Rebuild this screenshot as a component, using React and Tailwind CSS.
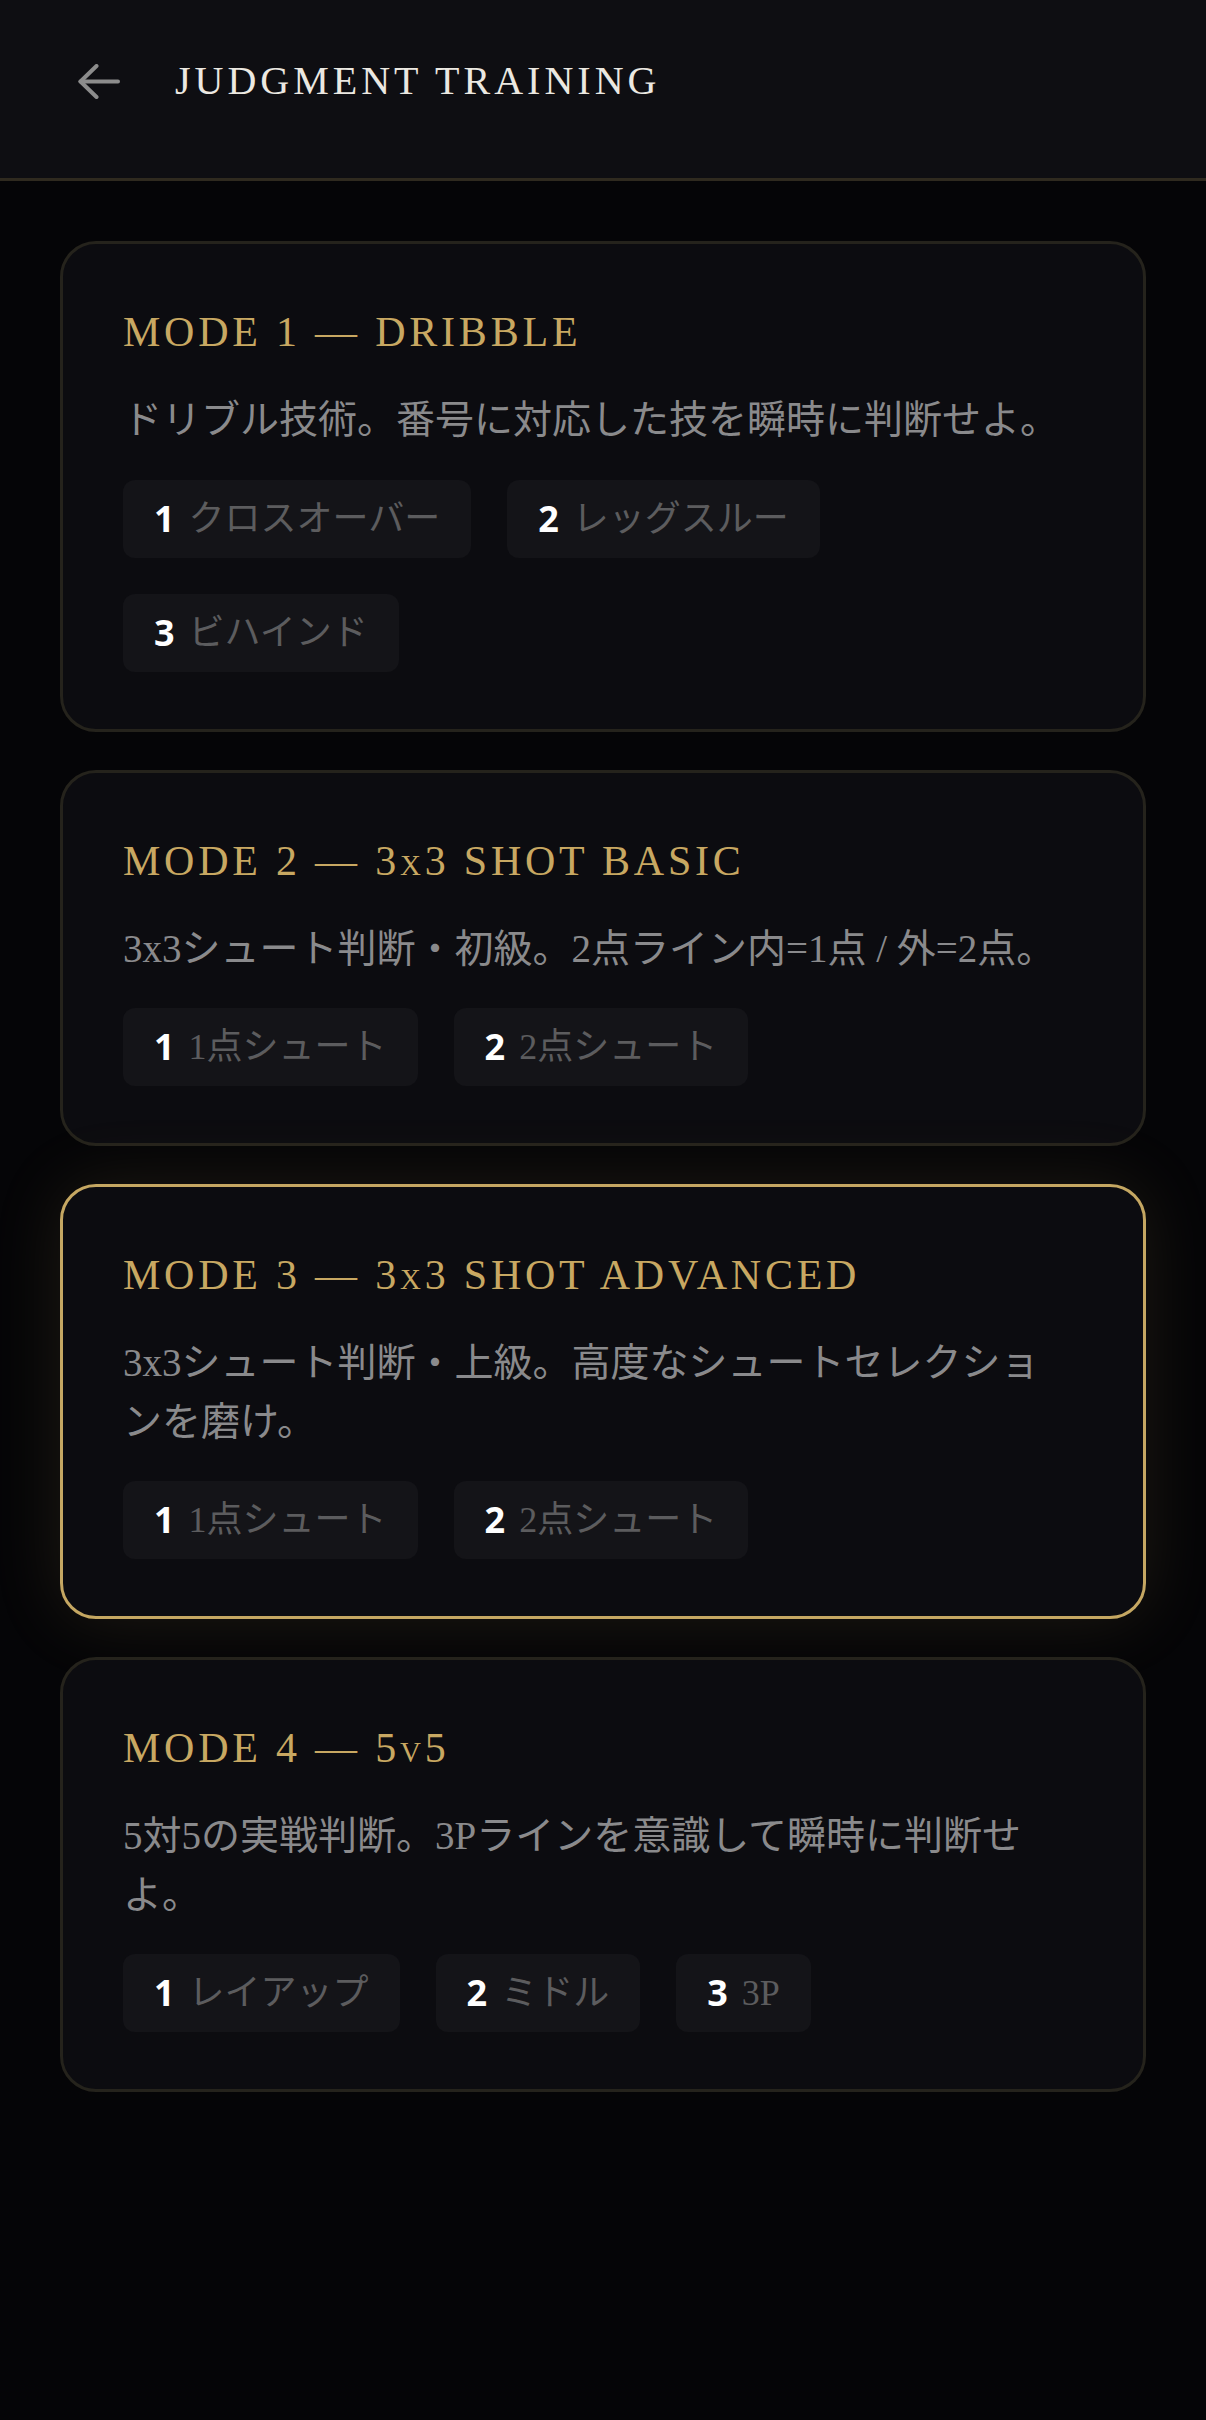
import React from "react";

const modes = [
  {
    title: "MODE 1 — DRIBBLE",
    desc: "ドリブル技術。番号に対応した技を瞬時に判断せよ。",
    options: ["クロスオーバー", "レッグスルー", "ビハインド"],
  },
  {
    title: "MODE 2 — 3x3 SHOT BASIC",
    desc: "3x3シュート判断・初級。2点ライン内=1点 / 外=2点。",
    options: ["1点シュート", "2点シュート"],
  },
  {
    title: "MODE 3 — 3x3 SHOT ADVANCED",
    desc: "3x3シュート判断・上級。高度なシュートセレクションを磨け。",
    options: ["1点シュート", "2点シュート"],
    active: true,
  },
  {
    title: "MODE 4 — 5v5",
    desc: "5対5の実戦判断。3Pラインを意識して瞬時に判断せよ。",
    options: ["レイアップ", "ミドル", "3P"],
  },
];

const serif = "font-['Liberation_Serif','Noto_Sans_CJK_JP',serif]";

const ModeCard = ({ mode }) => {
  return (
    <div
      className={
        mode.active
          ? "rounded-[36px] border-[3px] border-[#c5a762] bg-[#0c0c10] px-[60px] pt-[60px] pb-[57px] shadow-[0_0_70px_rgba(201,168,98,0.13)]"
          : "rounded-[36px] border-[3px] border-[#25231c] bg-[#0c0c10] px-[60px] pt-[60px] pb-[57px]"
      }
    >
      {/* TITLE */}
      <h2
        className={`${serif} text-[42px] leading-[56px] tracking-[0.09em] text-[#c8a862] [font-variant-caps:small-caps]`}
      >
        {mode.title}
      </h2>

      {/* DESC */}
      <p
        className={`${serif} mt-[31px] pr-[16px] text-[39px] leading-[58.5px] text-[#8a8a8c]`}
      >
        {mode.desc}
      </p>

      {/* OPTIONS */}
      <div className="mt-[30px] flex flex-wrap gap-[36px]">
        {mode.options.map((opt, i) => (
          <div
            key={i}
            className="flex h-[78px] items-center gap-[14px] rounded-[12px] bg-[#141418] px-[31px]"
          >
            <span className="font-['Noto_Sans',sans-serif] text-[36px] font-bold leading-none text-white">
              {i + 1}
            </span>
            <span className={`${serif} text-[36px] leading-none text-[#5c5c5e]`}>
              {opt}
            </span>
          </div>
        ))}
      </div>
    </div>
  );
};

const App = () => {
  return (
    <div className="min-h-[2420px] w-full bg-[#050507]">
      {/* HEADER */}
      <header className="flex h-[181px] items-center gap-[55px] border-b-[3px] border-[#2f2a1f] bg-[#0e0e12] px-[78px] pb-[16px]">
        <svg
          width="42"
          height="35"
          viewBox="0 0 42 35"
          fill="none"
          stroke="#8c8c8c"
          strokeWidth="4"
          strokeLinecap="round"
          strokeLinejoin="round"
        >
          <path d="M40 17.5H2.5" />
          <path d="M18.5 2L2.5 17.5L18.5 33" />
        </svg>
        <h1
          className={`${serif} text-[40px] leading-none tracking-[0.1em] text-[#ebe8e1]`}
        >
          JUDGMENT TRAINING
        </h1>
      </header>

      {/* MODES */}
      <main className="flex flex-col gap-[38px] px-[60px] pt-[60px] pb-[60px]">
        {modes.map((mode, i) => (
          <ModeCard key={i} mode={mode} />
        ))}
      </main>
    </div>
  );
};

export default App;
